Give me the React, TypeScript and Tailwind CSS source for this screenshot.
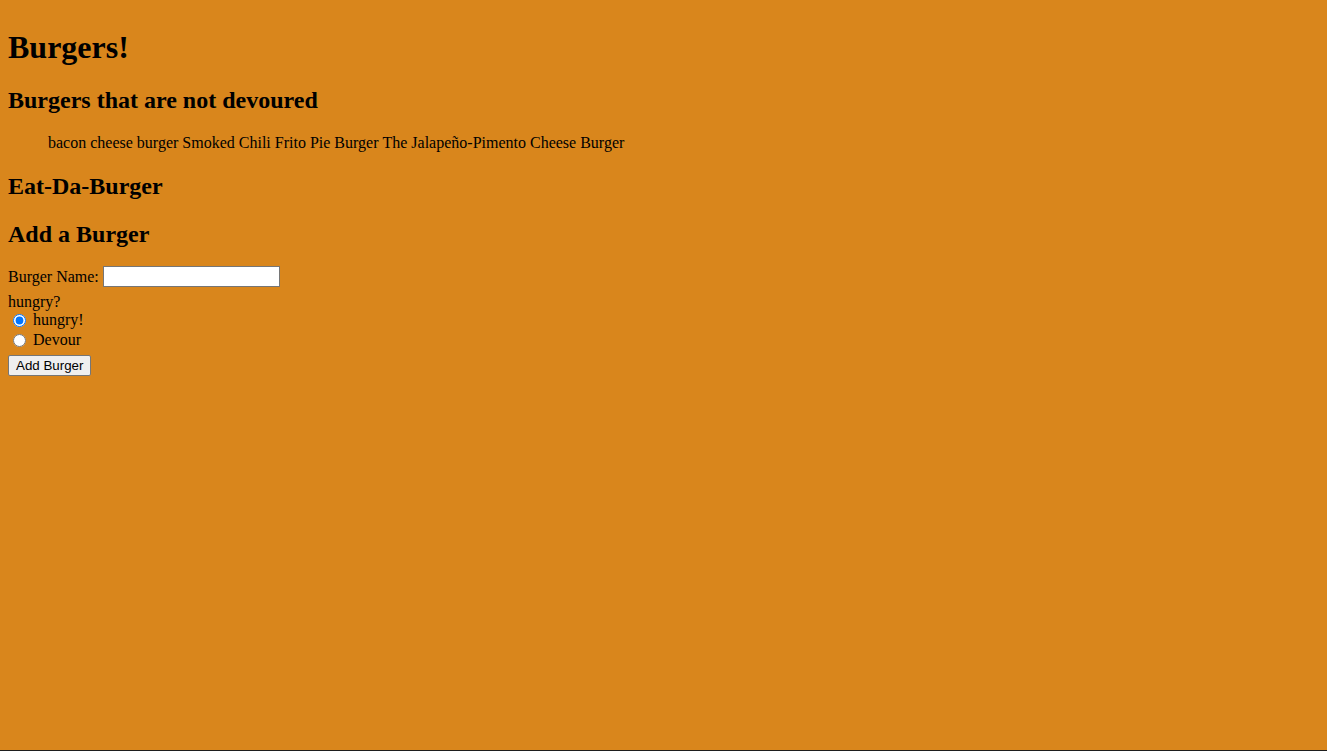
import React from "react";

export default function App() {
  return (
    <div
      className="h-screen w-full bg-[#d9861c] border-b border-[#1e1e1e] p-2 text-black overflow-hidden"
      style={{ fontFamily: '"Liberation Serif", "Times New Roman", serif' }}
    >
      <h1 className="text-[32px] font-bold leading-[37px] mt-[21px]">Burgers!</h1>
      <h2 className="text-[24px] font-bold leading-[28px] mt-[20px]">Burgers that are not devoured</h2>
      <ul className="pl-10 mt-[20px] text-[16px] leading-[18px]">
        <li className="inline">bacon cheese burger</li>{" "}
        <li className="inline">Smoked Chili Frito Pie Burger</li>{" "}
        <li className="inline">The Jalapeño-Pimento Cheese Burger</li>
      </ul>
      <h2 className="text-[24px] font-bold leading-[28px] mt-[20px]">Eat-Da-Burger</h2>
      <h2 className="text-[24px] font-bold leading-[28px] mt-[20px]">Add a Burger</h2>
      <form className="text-[16px] leading-[18px]" onSubmit={(e) => e.preventDefault()}>
        <div className="flex items-center h-[21px] mt-[18px]">
          <label>Burger Name:</label>
          <input
            type="text"
            className="ml-[4px] w-[177px] h-[21px] bg-white border border-[#767676] px-[2px] text-[13px]"
            style={{ fontFamily: '"Liberation Sans", Arial, sans-serif' }}
          />
        </div>
        <div className="mt-[6px] h-[17px]">hungry?</div>
        <div className="flex items-center h-[20px]">
          <input type="radio" name="h" defaultChecked className="ml-[5px] mr-[7px] w-[13px] h-[13px]" />
          <span>hungry!</span>
        </div>
        <div className="flex items-center h-[20px]">
          <input type="radio" name="h" className="ml-[5px] mr-[7px] w-[13px] h-[13px]" />
          <span>Devour</span>
        </div>
        <button
          type="submit"
          className="mt-[5px] h-[21px] px-[7px] bg-[#efefef] border border-[#767676] rounded-[2px] text-[13.33px] leading-[15px]"
          style={{ fontFamily: '"Liberation Sans", Arial, sans-serif' }}
        >
          Add Burger
        </button>
      </form>
    </div>
  );
}
